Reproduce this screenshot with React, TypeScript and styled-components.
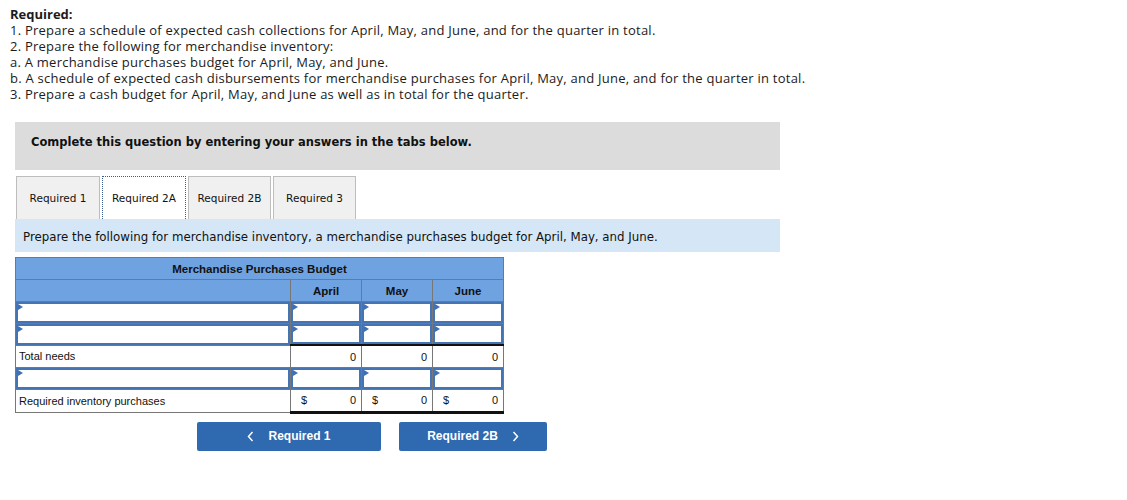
import * as React from 'react';
import styled, { createGlobalStyle } from 'styled-components';

const GlobalStyle = createGlobalStyle`
  html, body {
    margin: 0;
    padding: 0;
    background: #ffffff;
  }
  body {
    font-family: "Open Sans", "Liberation Sans", sans-serif;
    color: #1a1a1a;
  }
`;

const Page = styled.div`
  width: 1127px;
  height: 500px;
  padding: 6px 0 0 10px;
  box-sizing: border-box;
`;

const Intro = styled.div`
  font-family: "Open Sans", Lato, sans-serif;
  font-size: 13px;
  letter-spacing: 0.24px;
  line-height: 16px;
  color: #1b1b1b;
`;

const IntroTitle = styled.div`
  font-weight: 700;
  letter-spacing: 0;
`;

const Work = styled.div`
  margin: 20px 0 0 5px;
  width: 765px;
`;

const Prompt = styled.div`
  background: #dcdcdc;
  height: 48px;
  box-sizing: border-box;
  display: flex;
  align-items: center;
  padding: 0 0 8px 16px;
  font-family: "DejaVu Sans", Verdana, sans-serif;
  font-weight: 700;
  font-size: 11.5px;
  color: #111;
`;

const Tabs = styled.div`
  display: flex;
  align-items: flex-end;
  gap: 2px;
  margin-top: 6px;
  padding-left: 1px;
`;

const Tab = styled.div<{ $active?: boolean; $w: number }>`
  width: ${({ $w }) => $w}px;
  height: 43px;
  box-sizing: border-box;
  display: flex;
  align-items: center;
  justify-content: center;
  font-family: "DejaVu Sans", Verdana, sans-serif;
  font-size: 10.5px;
  color: #111;
  background: ${({ $active }) => ($active ? '#ffffff' : '#f0f0f0')};
  border: ${({ $active }) => ($active ? '1px dotted #3b5b8c' : '1px solid #bdbdbd')};
  border-bottom: none;
`;

const Instruction = styled.div`
  background: #d5e7f6;
  height: 33px;
  box-sizing: border-box;
  display: flex;
  align-items: center;
  padding: 3px 0 0 8px;
  font-family: "DejaVu Sans", Verdana, sans-serif;
  font-size: 11.8px;
  color: #111;
`;

const Table = styled.table`
  margin-top: 5px;
  border-collapse: collapse;
  font-family: "Liberation Sans", Arial, sans-serif;
  font-size: 11px;
  color: #111;
`;

const TitleCell = styled.th`
  background: #6ea2e0;
  border: 1px solid #777;
  height: 21px;
  padding: 0;
  font-weight: 700;
  font-size: 11.5px;
  text-align: center;
`;

const HeadCell = styled.th<{ $w: number }>`
  background: #6ea2e0;
  border: 1px solid #777;
  width: ${({ $w }) => $w}px;
  height: 21px;
  padding: 0;
  font-weight: 700;
  font-size: 11.5px;
  text-align: center;
`;

const LabelCell = styled.td`
  border: 1px solid #777;
  height: 21px;
  padding: 0 3px;
`;

const InputCell = styled.td`
  border: 1px solid #777;
  height: 20.5px;
  padding: 0;
  position: relative;
  &::before {
    content: '';
    position: absolute;
    inset: 0;
    border: 2px solid #4474b4;
  }
  &::after {
    content: '';
    position: absolute;
    top: 2px;
    left: 2px;
    width: 0;
    height: 0;
    border-left: 5px solid #3f6fb6;
    border-top: 3px solid transparent;
    border-bottom: 3px solid transparent;
  }
`;

const ValueCell = styled.td<{ $line?: 'top' | 'bottom' }>`
  border: 1px solid #777;
  ${({ $line }) => ($line === 'top' ? 'border-top: 2px solid #111;' : '')}
  ${({ $line }) => ($line === 'bottom' ? 'border-bottom: 3px solid #111;' : '')}
  height: 21px;
  padding: 0 5px 0 10px;
  text-align: right;
`;

const Money = styled.div`
  display: flex;
  justify-content: space-between;
`;

const Nav = styled.div`
  display: flex;
  gap: 18px;
  margin: 8px 0 0 182px;
`;

const NavButton = styled.button<{ $w: number }>`
  width: ${({ $w }) => $w}px;
  height: 29px;
  border: none;
  border-radius: 2px;
  background: #2f69b0;
  color: #ffffff;
  font-family: "Liberation Sans", Arial, sans-serif;
  font-weight: 700;
  font-size: 12px;
  display: flex;
  align-items: center;
  justify-content: center;
  gap: 14px;
  padding: 0;
`;

const Chevron = ({ dir }: { dir: 'left' | 'right' }) => (
  <svg width="7" height="11" viewBox="0 0 7 11" fill="none">
    <path
      d={dir === 'left' ? 'M5.5 1 L1.5 5.5 L5.5 10' : 'M1.5 1 L5.5 5.5 L1.5 10'}
      stroke="#ffffff"
      strokeWidth="1.5"
    />
  </svg>
);

const inputRow = (key: string) => (
  <tr key={key}>
    <InputCell />
    <InputCell />
    <InputCell />
    <InputCell />
  </tr>
);

export default function App() {
  return (
    <>
      <GlobalStyle />
      <Page>
        <Intro>
          <IntroTitle>Required:</IntroTitle>
          <div>1. Prepare a schedule of expected cash collections for April, May, and June, and for the quarter in total.</div>
          <div>2. Prepare the following for merchandise inventory:</div>
          <div>a. A merchandise purchases budget for April, May, and June.</div>
          <div>b. A schedule of expected cash disbursements for merchandise purchases for April, May, and June, and for the quarter in total.</div>
          <div>3. Prepare a cash budget for April, May, and June as well as in total for the quarter.</div>
        </Intro>
        <Work>
          <Prompt>Complete this question by entering your answers in the tabs below.</Prompt>
          <Tabs>
            <Tab $w={84}>Required 1</Tab>
            <Tab $w={84} $active>Required 2A</Tab>
            <Tab $w={83}>Required 2B</Tab>
            <Tab $w={83}>Required 3</Tab>
          </Tabs>
          <Instruction>
            Prepare the following for merchandise inventory, a merchandise purchases budget for April, May, and June.
          </Instruction>
          <Table>
            <thead>
              <tr>
                <TitleCell colSpan={4}>Merchandise Purchases Budget</TitleCell>
              </tr>
              <tr>
                <HeadCell $w={274} />
                <HeadCell $w={70}>April</HeadCell>
                <HeadCell $w={70}>May</HeadCell>
                <HeadCell $w={70}>June</HeadCell>
              </tr>
            </thead>
            <tbody>
              {inputRow('a')}
              {inputRow('b')}
              <tr>
                <LabelCell>Total needs</LabelCell>
                <ValueCell $line="top">0</ValueCell>
                <ValueCell $line="top">0</ValueCell>
                <ValueCell $line="top">0</ValueCell>
              </tr>
              {inputRow('c')}
              <tr>
                <LabelCell>Required inventory purchases</LabelCell>
                {[0, 1, 2].map(i => (
                  <ValueCell key={i} $line="bottom">
                    <Money>
                      <span>$</span>
                      <span>0</span>
                    </Money>
                  </ValueCell>
                ))}
              </tr>
            </tbody>
          </Table>
          <Nav>
            <NavButton $w={184}>
              <Chevron dir="left" />
              Required 1
            </NavButton>
            <NavButton $w={148}>
              Required 2B
              <Chevron dir="right" />
            </NavButton>
          </Nav>
        </Work>
      </Page>
    </>
  );
}
